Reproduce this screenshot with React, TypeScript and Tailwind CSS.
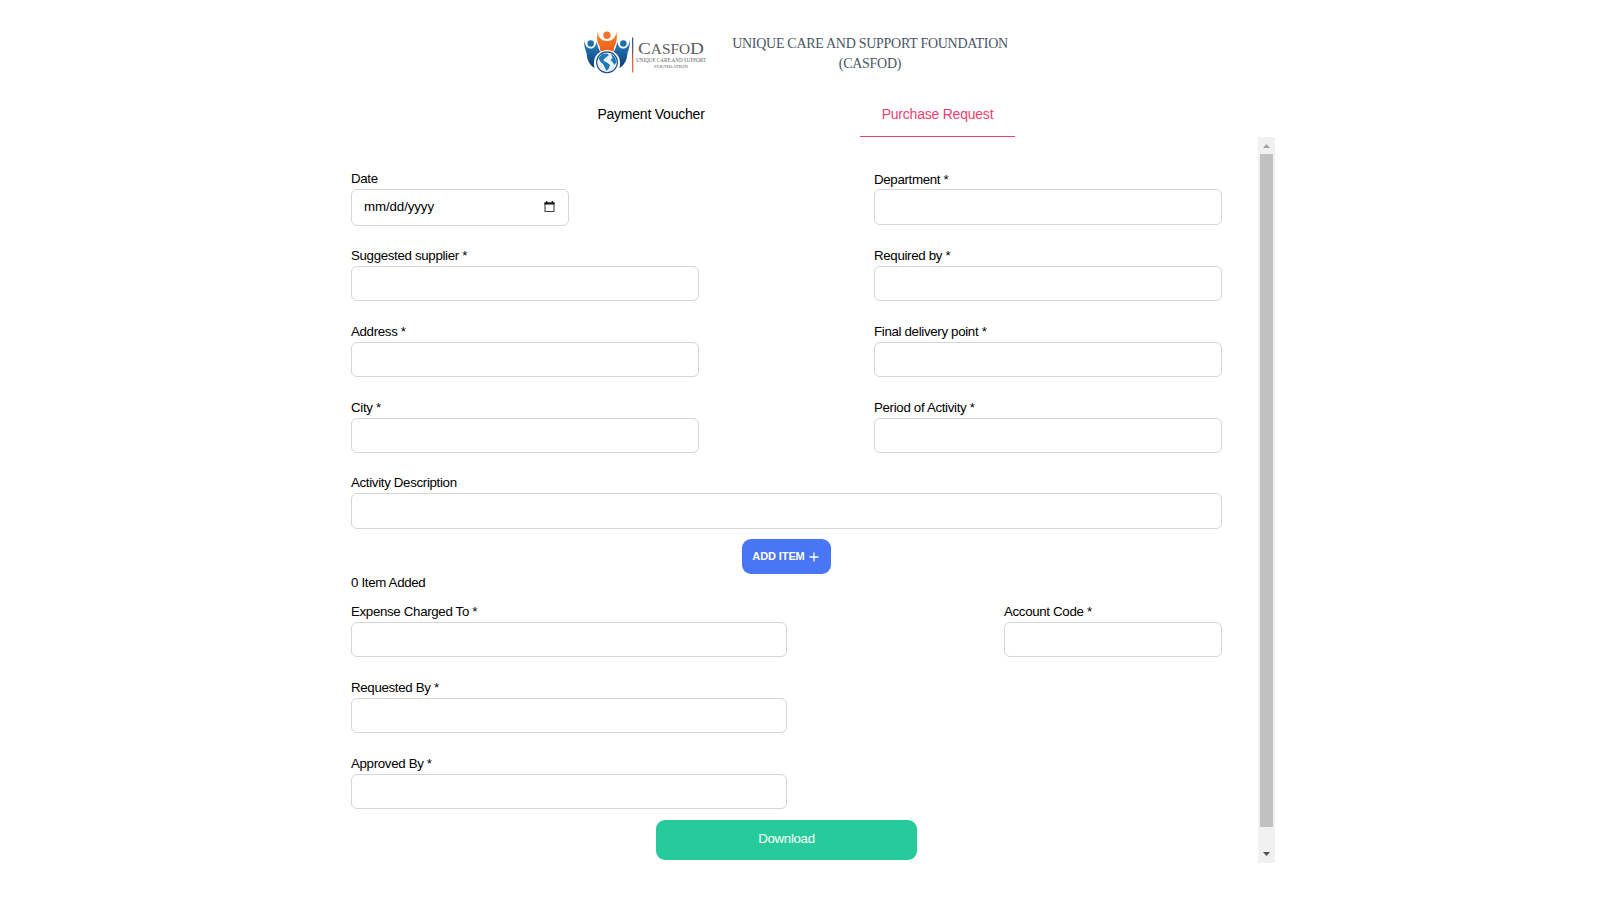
import React from "react";

type FieldProps = { label: string; width: string; box?: string; labelClass?: string };

function Field({ label, width, box = "h-[35px]", labelClass = "leading-[19px]" }: FieldProps) {
  return (
    <label className={`flex flex-col ${width}`}>
      <span className={`h-5 whitespace-nowrap ${labelClass}`}>{label}</span>
      <input className={`w-full rounded-md border border-gray-300 bg-white px-3 outline-none ${box}`} />
    </label>
  );
}

function Logo() {
  return (
    <svg className="overflow-visible" width="126" height="46" viewBox="0 0 126 46">
      <defs>
        <linearGradient id="blue" x1="0" y1="0" x2="0" y2="1">
          <stop offset="0" stopColor="#2a86c0" />
          <stop offset="1" stopColor="#0b3a75" />
        </linearGradient>
        <linearGradient id="orange" x1="0" y1="0" x2="0" y2="1">
          <stop offset="0" stopColor="#f58a2c" />
          <stop offset="1" stopColor="#ee5a17" />
        </linearGradient>
        <linearGradient id="divider" x1="0" y1="0" x2="0" y2="1">
          <stop offset="0" stopColor="#2d5590" />
          <stop offset=".35" stopColor="#6a5a7c" />
          <stop offset=".65" stopColor="#e0623a" />
          <stop offset="1" stopColor="#e8703f" />
        </linearGradient>
      </defs>
      <path d="M1 10C2 16 4.500 18.500 8 18.500C11 18.500 13 16 13.700 11.500C14.500 16 16 20 17.500 22C12 24.500 10 30 11.500 38C5 34 4 28 3.500 23C2 19 .8 15 1 10Z" fill="url(#blue)" />
      <path d="M47 10C46 16 43.500 18.500 40 18.500C37 18.500 35 16 34.300 11.500C33.500 16 32 20 30.500 22C36 24.500 38 30 36.500 38C43 34 44 28 44.500 23C46 19 47.200 15 47 10Z" fill="url(#blue)" />
      <path d="M14.500 2C15.500 8 19 11 24 11C29 11 32.500 8 33.500 2C34.500 9 33.500 13 31.500 16C31 18 30.800 19.500 30.500 21.500C26 19.500 22 19.500 17.500 21.500C17.200 19.500 17 18 16.500 16C14.500 13 13.500 9 14.500 2Z" fill="url(#orange)" />
      <circle cx="24" cy="5.500" r="4.300" fill="#fff" />
      <circle cx="24" cy="5.200" r="3.700" fill="#f2762a" />
      <circle cx="7.700" cy="13.800" r="3.900" fill="#fff" />
      <circle cx="40.300" cy="13.800" r="3.900" fill="#fff" />
      <circle cx="7.700" cy="13.500" r="3.200" fill="#1c6fab" />
      <circle cx="40.300" cy="13.500" r="3.200" fill="#1c6fab" />
      <circle cx="24" cy="32.300" r="11.700" fill="#fff" />
      <circle cx="24" cy="32.300" r="10.400" fill="#eaf4fa" stroke="#12487f" strokeWidth="1.100" />
      <path d="M15.500 28L19 24L24 23.500L26 25L23.500 27L21 29L20.500 31L24 32.500L27 35L25.500 39L23.500 41L21.500 37L20 34L17.500 32ZM28 24L32 27L33.500 32L31.500 35L29.500 32L27.500 30L29.500 28Z" fill="#1f78b8" />
      <rect x="49" y="7.500" width="1.300" height="35" fill="url(#divider)" />
      <text x="55" y="24" fontFamily="Liberation Serif, serif" fill="#5d5d61" fontSize="17.500" textLength="66" lengthAdjust="spacingAndGlyphs">
        C<tspan fontSize="14">ASFO</tspan>D
      </text>
      <text x="53" y="32" fontFamily="Liberation Serif, serif" fill="#66666a" fontSize="5.500" textLength="70" lengthAdjust="spacingAndGlyphs">UNIQUE CARE AND SUPPORT</text>
      <text x="71" y="37.500" fontFamily="Liberation Serif, serif" fill="#66666a" fontSize="5" textLength="34" lengthAdjust="spacingAndGlyphs">FOUNDATION</text>
    </svg>
  );
}

function Scrollbar() {
  return (
    <div className="flex h-[726px] w-[17px] flex-col items-center bg-[#f1f1f1]">
      <svg width="17" height="17" viewBox="0 0 17 17"><path d="M5 11L8.500 7L12 11Z" fill="#a3a3a3" /></svg>
      <div className="h-[673px] w-[13px] bg-[#c1c1c1]" />
      <svg className="mt-[19px]" width="17" height="17" viewBox="0 0 17 17"><path d="M5 6L8.500 10L12 6Z" fill="#505050" /></svg>
    </div>
  );
}

export default function App() {
  return (
    <div className="h-[915px] w-[1608px] overflow-hidden bg-white pl-[333px] font-['Liberation_Sans',Arial,sans-serif] text-[13.3px] tracking-[-0.33px] text-black">
      <header className="flex h-[92px] pt-[30px] pl-[250px] tracking-normal">
        <Logo />
        <h1 className="ml-[13px] w-[296px] pt-1 text-center font-['Liberation_Serif',serif] text-[14px] leading-5 tracking-[-0.28px] text-gray-600">
          UNIQUE CARE AND SUPPORT FOUNDATION (CASFOD)
        </h1>
      </header>
      <nav className="flex h-[45px] gap-[131px] pl-[240px] text-[14px] tracking-[-0.22px]">
        <button className="h-[45px] w-[156px] text-center">Payment Voucher</button>
        <button className="h-[45px] w-[155px] border-b border-[#f43f6e] text-center text-[#ee3f70]">Purchase Request</button>
      </nav>
      <main className="flex">
        <form className="h-[726px] w-[925px] pt-8 pr-9 pl-[18px]">
          <div className="flex h-[77px] justify-between">
            <div className="flex w-[218px] flex-col">
              <span className="h-5 leading-[19px]">Date</span>
              <div className="flex h-[37px] items-center justify-between rounded-md border border-gray-300 pr-[13.500px] pb-px pl-3">
                <span className="tracking-[-0.1px]">mm/dd/yyyy</span>
                <svg width="11" height="12" viewBox="0 0 11 12">
                  <path d="M1 2H10V10.500H1Z" fill="none" stroke="#444" strokeWidth="1.100" />
                  <path d="M.5 1.500H10.500V3.500H.5ZM2 0H3.300V2H2ZM7.700 0H9V2H7.700Z" fill="#111" />
                </svg>
              </div>
            </div>
            <Field label="Department *" width="w-[348px]" box="h-9" labelClass="leading-[21px]" />
          </div>
          <div className="flex h-[76px] justify-between">
            <Field label="Suggested supplier *" width="w-[348px]" />
            <Field label="Required by *" width="w-[348px]" />
          </div>
          <div className="flex h-[76px] justify-between">
            <Field label="Address *" width="w-[348px]" />
            <Field label="Final delivery point *" width="w-[348px]" />
          </div>
          <div className="flex h-[75px] justify-between">
            <Field label="City *" width="w-[348px]" />
            <Field label="Period of Activity *" width="w-[348px]" />
          </div>
          <Field label="Activity Description" width="w-[871px]" box="h-9" />
          <button type="button" className="mx-auto mt-[10px] flex h-[35px] w-[89px] items-center justify-center gap-1 rounded-[9px] bg-[#4976f3] pr-0.5 text-[11px] font-bold tracking-[-0.1px] text-white">
            ADD ITEM
            <svg width="10" height="10" viewBox="0 0 10 10"><path d="M5 .5V9.500M.5 5H9.500" stroke="white" strokeWidth="1.300" /></svg>
          </button>
          <p className="h-7 leading-[18px]">0 Item Added</p>
          <div className="flex h-[76px] justify-between">
            <Field label="Expense Charged To *" width="w-[436px]" />
            <Field label="Account Code *" width="w-[218px]" />
          </div>
          <div className="h-[76px]"><Field label="Requested By *" width="w-[436px]" /></div>
          <Field label="Approved By *" width="w-[436px]" />
          <button type="button" className="mx-auto mt-[11px] block h-10 w-[261px] rounded-[9px] bg-[#27ca9a] pb-[3px] text-white">Download</button>
        </form>
        <Scrollbar />
      </main>
    </div>
  );
}
